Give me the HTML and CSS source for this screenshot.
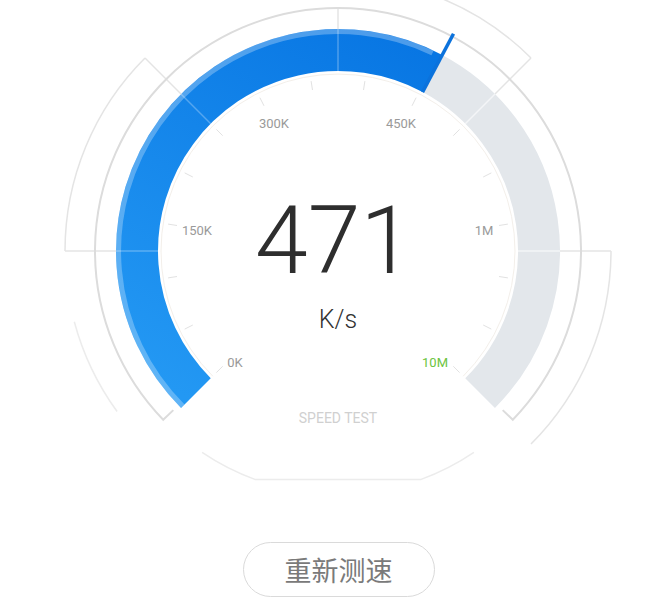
FILE: index.html
```html
<!DOCTYPE html>
<html lang="zh-CN">
<head>
<meta charset="utf-8">
<title>Speed Test</title>
<link rel="stylesheet" href="styles.css">
</head>
<body>
<main class="page">
  <section class="gauge">
    <svg class="gauge-svg" width="655" height="500" viewBox="0 0 655 500" xmlns="http://www.w3.org/2000/svg">
      <defs>
        <linearGradient id="blueGrad" gradientUnits="userSpaceOnUse" x1="410" y1="40" x2="190" y2="400">
          <stop offset="0" stop-color="#0876e3"/>
          <stop offset="1" stop-color="#2398f3"/>
        </linearGradient>
      </defs>

      <!-- outer bracket arcs -->
      <g class="bracket">
        <path d="M65 251 A273 273 0 0 1 145 58"/>
        <path d="M338 -22 A273 273 0 0 1 531 58"/>
        <path d="M611 251 A273 273 0 0 1 531 444"/>
        <path class="faint" d="M117.1 411.5 A273 273 0 0 1 74.3 321.7"/>
        <line x1="65" y1="251" x2="116" y2="251"/>
        <line x1="145" y1="58" x2="181" y2="94"/>
        <line x1="531" y1="58" x2="495" y2="94"/>
        <line x1="611" y1="251" x2="560" y2="251"/>
        <line x1="338" y1="8" x2="338" y2="29"/>
      </g>

      <!-- main ring -->
      <path class="ring" d="M173.3 410.1 L163.2 419.8 A243 243 0 1 1 512.8 419.8 L502.7 410.1"/>

      <!-- bottom decoration -->
      <path class="bottom" d="M473.9 452.4 A243 243 0 0 1 421.1 479.4 L254.9 479.4 A243 243 0 0 1 202.1 452.4"/>

      <!-- bands -->
      <path class="band-gray" d="M432.4 73.5 A201 201 0 0 1 480.1 393.1"/>
      <path class="band-blue" d="M195.9 393.1 A201 201 0 0 1 432.4 73.5"/>
      <path class="band-shine" d="M182.8 406.2 A219.5 219.5 0 0 1 432.5 52.9"/>

      <!-- lines across bands -->
      <g class="band-lines">
        <line x1="116" y1="251" x2="158" y2="251"/>
        <line x1="181" y1="94" x2="210.7" y2="123.7"/>
        <line x1="338" y1="29" x2="338" y2="71"/>
      </g>
      <g class="band-lines-gray">
        <line x1="495" y1="94" x2="465.3" y2="123.7"/>
        <line x1="560" y1="251" x2="518" y2="251"/>
      </g>

      <!-- needle -->
      <line class="needle" x1="422.5" y1="92.1" x2="453.5" y2="33.8"/>

      <!-- tick ring -->
      <path class="tick-ring" d="M212.8 376.2 A177 177 0 1 1 463.2 376.2"/>
      <g class="ticks">
        <line x1="222.7" y1="366.3" x2="216.4" y2="372.6"/>
        <line x1="192.8" y1="325.0" x2="184.7" y2="329.1"/>
        <line x1="177.0" y1="276.5" x2="168.1" y2="277.9"/>
        <line x1="177.0" y1="225.5" x2="168.1" y2="224.1"/>
        <line x1="192.8" y1="177.0" x2="184.7" y2="172.9"/>
        <line x1="222.7" y1="135.7" x2="216.4" y2="129.4"/>
        <line x1="264.0" y1="105.8" x2="259.9" y2="97.7"/>
        <line x1="312.5" y1="90.0" x2="311.1" y2="81.1"/>
        <line x1="363.5" y1="90.0" x2="364.9" y2="81.1"/>
        <line x1="412.0" y1="105.8" x2="416.1" y2="97.7"/>
        <line x1="453.3" y1="135.7" x2="459.6" y2="129.4"/>
        <line x1="483.2" y1="177.0" x2="491.3" y2="172.9"/>
        <line x1="499.0" y1="225.5" x2="507.9" y2="224.1"/>
        <line x1="499.0" y1="276.5" x2="507.9" y2="277.9"/>
        <line x1="483.2" y1="325.0" x2="491.3" y2="329.1"/>
        <line x1="453.3" y1="366.3" x2="459.6" y2="372.6"/>
      </g>

      <!-- scale labels -->
      <g class="labels">
        <text x="235" y="366.5">0K</text>
        <text x="197" y="234.5">150K</text>
        <text x="274" y="127.5">300K</text>
        <text x="401" y="127.5">450K</text>
        <text x="484" y="234.5">1M</text>
        <text class="label-max" x="435" y="366.5">10M</text>
      </g>

      <text class="value" x="334" y="273">471</text>
      <text class="unit" x="338" y="328">K/s</text>
      <text class="caption" x="338" y="423">SPEED TEST</text>
    </svg>
  </section>
  <div class="actions">
    <button class="retest" type="button">重新测速</button>
  </div>
</main>
</body>
</html>
```

FILE: styles.css
```css
html, body {
  margin: 0;
  padding: 0;
  background: #ffffff;
}

.page {
  width: 655px;
  height: 607px;
  overflow: hidden;
  font-family: Roboto, "Noto Sans", sans-serif;
}

.gauge-svg {
  display: block;
}

.bracket path,
.bracket line {
  fill: none;
  stroke: #e4e4e4;
  stroke-width: 1.5;
}

.bracket .faint {
  stroke: #ececec;
}

.ring {
  fill: none;
  stroke: #dcdcdc;
  stroke-width: 2;
  stroke-linejoin: miter;
}

.bottom {
  fill: none;
  stroke: #ececec;
  stroke-width: 1.5;
}

.band-gray {
  fill: none;
  stroke: #e3e7eb;
  stroke-width: 42;
}

.band-blue {
  fill: none;
  stroke: url(#blueGrad);
  stroke-width: 42;
}

.band-shine {
  fill: none;
  stroke: rgba(255, 255, 255, 0.28);
  stroke-width: 5;
}

.band-lines line {
  stroke: rgba(255, 255, 255, 0.28);
  stroke-width: 1.5;
}

.band-lines-gray line {
  stroke: rgba(255, 255, 255, 0.6);
  stroke-width: 1.5;
}

.needle {
  stroke: #0b72dc;
  stroke-width: 3.5;
}

.tick-ring {
  fill: none;
  stroke: #f3efea;
  stroke-width: 1;
}

.ticks line {
  stroke: #e2e2e2;
  stroke-width: 1;
}

.labels text {
  font-family: Roboto, "Noto Sans", sans-serif;
  font-size: 13px;
  fill: #9a9a9a;
  text-anchor: middle;
}

.labels .label-max {
  fill: #6cc440;
}

.value {
  font-family: Roboto, "Noto Sans", sans-serif;
  font-weight: 300;
  font-size: 95px;
  fill: #2e2e2e;
  text-anchor: middle;
}

.unit {
  font-family: Roboto, "Noto Sans", sans-serif;
  font-weight: 300;
  font-size: 25px;
  fill: #333333;
  text-anchor: middle;
}

.caption {
  font-family: Roboto, "Noto Sans", sans-serif;
  font-size: 14px;
  fill: #d0d0d0;
  text-anchor: middle;
}

.actions {
  width: 677px;
  display: flex;
  justify-content: center;
  padding-top: 42px;
}

.retest {
  box-sizing: border-box;
  width: 192px;
  height: 55px;
  border: 1.5px solid #dadada;
  border-radius: 28px;
  background: #ffffff;
  color: #7a7a7a;
  font-family: "Noto Sans CJK SC", "Noto Sans", sans-serif;
  font-size: 27px;
  line-height: 1;
  padding: 0;
  letter-spacing: 0;
}
```
